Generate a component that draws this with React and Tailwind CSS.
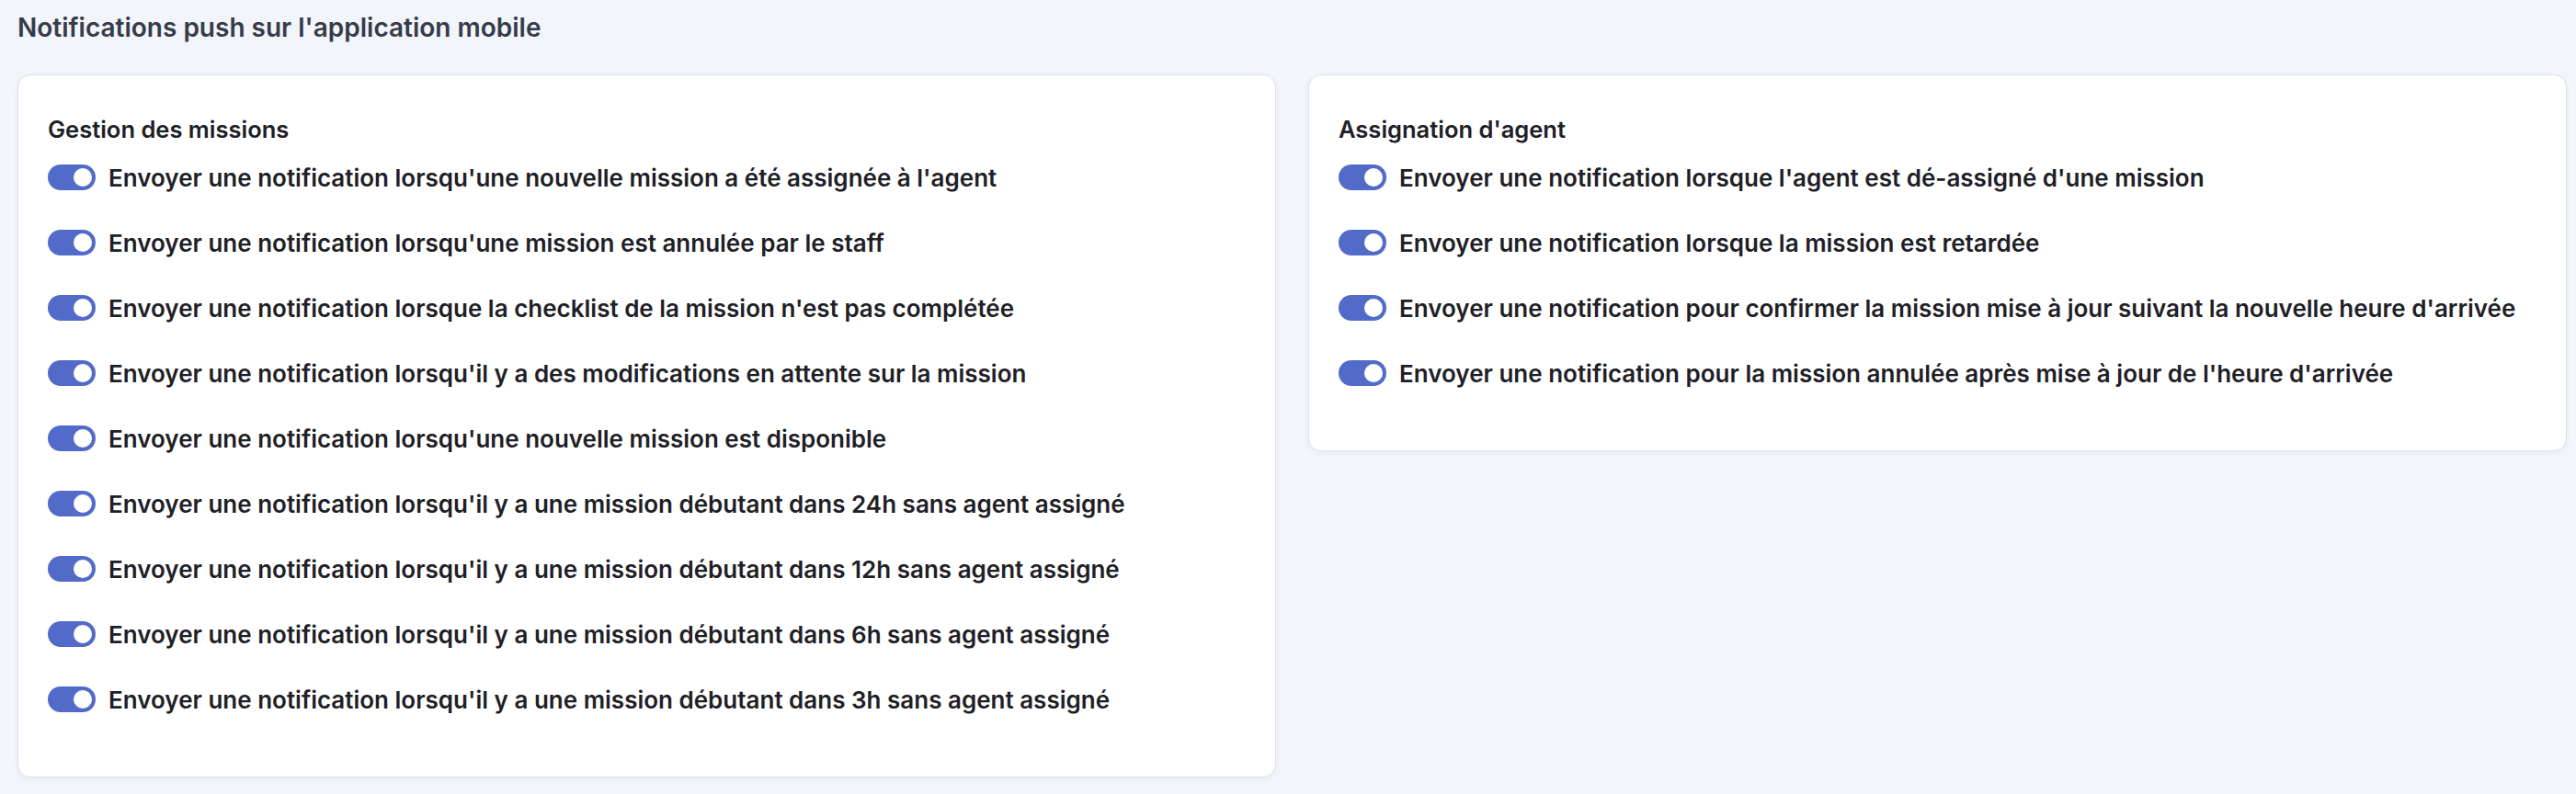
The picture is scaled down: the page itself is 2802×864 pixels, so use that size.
import React from "react";

const missions = [
  "Envoyer une notification lorsqu'une nouvelle mission a été assignée à l'agent",
  "Envoyer une notification lorsqu'une mission est annulée par le staff",
  "Envoyer une notification lorsque la checklist de la mission n'est pas complétée",
  "Envoyer une notification lorsqu'il y a des modifications en attente sur la mission",
  "Envoyer une notification lorsqu'une nouvelle mission est disponible",
  "Envoyer une notification lorsqu'il y a une mission débutant dans 24h sans agent assigné",
  "Envoyer une notification lorsqu'il y a une mission débutant dans 12h sans agent assigné",
  "Envoyer une notification lorsqu'il y a une mission débutant dans 6h sans agent assigné",
  "Envoyer une notification lorsqu'il y a une mission débutant dans 3h sans agent assigné",
];

const agent = [
  "Envoyer une notification lorsque l'agent est dé-assigné d'une mission",
  "Envoyer une notification lorsque la mission est retardée",
  "Envoyer une notification pour confirmer la mission mise à jour suivant la nouvelle heure d'arrivée",
  "Envoyer une notification pour la mission annulée après mise à jour de l'heure d'arrivée",
];

function Toggle() {
  return (
    <span className="relative inline-flex h-[28px] w-[52px] shrink-0 items-center rounded-full bg-[#526bc9]">
      <span className="absolute right-[4px] h-[20px] w-[20px] rounded-full bg-white" />
    </span>
  );
}

function Card({ title, items }) {
  return (
    <div className="rounded-[14px] border border-[#dde1ee] bg-white px-[32px] pt-[41px] pb-[66px] shadow-[0_2px_6px_rgba(30,40,80,0.05)]">
      <h3 className="text-[25.5px] leading-[36px] font-semibold text-[#1e2026]">{title}</h3>
      <div className="mt-[16px] flex flex-col gap-[35px]">
        {items.map((t) => (
          <label key={t} className="flex h-[36px] items-center gap-[14px]">
            <Toggle />
            <span className="text-[26px] font-semibold text-[#1e2026] whitespace-nowrap">{t}</span>
          </label>
        ))}
      </div>
    </div>
  );
}

export default function App() {
  return (
    <div className="min-h-[864px] bg-[#f2f5fa] pl-[19px] pr-[10px] pt-[10px] font-['Inter',sans-serif]">
      <h2 className="text-[28px] leading-[40px] font-semibold text-[#363b4a]">
        Notifications push sur l'application mobile
      </h2>
      <div className="mt-[31px] grid grid-cols-2 items-start gap-[35px]">
        <Card title="Gestion des missions" items={missions} />
        <Card title="Assignation d'agent" items={agent} />
      </div>
    </div>
  );
}
